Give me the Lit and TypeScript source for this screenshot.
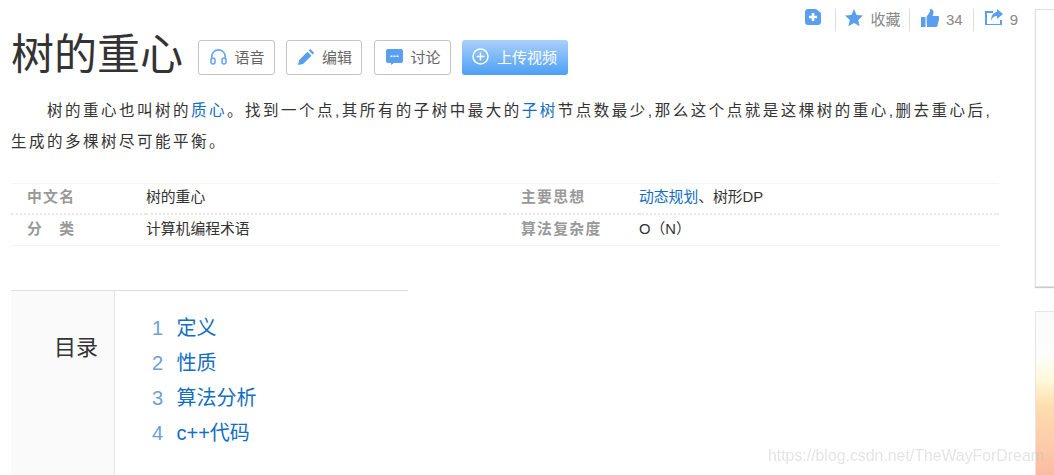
import { LitElement, html, css, svg } from 'lit';
import { customElement } from 'lit/decorators.js';

const BLUE = '#5a9ef0';

const icons = {
  add: svg`<path d="M3 0h8l5 4v9c0 1.700-1.300 3-3 3H3c-1.700 0-3-1.300-3-3V3c0-1.700 1.300-3 3-3z" fill="${BLUE}"/><path d="M8 4v8M4 8h8" stroke="#fff" stroke-width="2.600"/>`,
  star: svg`<path d="M9 0l2.600 6 6.400.6-4.800 4.300 1.400 6.400L9 14l-5.600 3.300 1.400-6.400L0 6.600 6.400 6z" fill="${BLUE}"/>`,
  thumb: svg`<path d="M0 8h4.500v10H0zM5.500 8l3.500-5.500V0c2 0 3.500 1 3.500 3 0 1.500-.5 3-1 4h5.500c1 0 1.500 1 1.300 2l-1.800 7.500c-.3 1-1 1.500-2 1.500h-8.500z" fill="${BLUE}"/>`,
  share: svg`<path d="M8 3H1v13h15v-5" fill="none" stroke="${BLUE}" stroke-width="2"/><path d="M12 0l6 5-6 5V7C9 7 7 8.500 6 12c0-5 2-8.500 6-9z" fill="${BLUE}"/>`,
  headset: svg`<path d="M1.800 11.500V8.500a6.700 6.700 0 0 1 13.400 0v3" fill="none" stroke="#6aa8f5" stroke-width="1.700"/><rect x="1" y="10" width="4" height="6" rx="2" fill="none" stroke="#6aa8f5" stroke-width="1.600"/><rect x="12" y="10" width="4" height="6" rx="2" fill="none" stroke="#6aa8f5" stroke-width="1.600"/>`,
  pencil: svg`<path d="M0 16l1.200-5L9.500 2.700l4 4L5 15zM10.700 1.500L12.200 0l4 4-1.500 1.500z" fill="${BLUE}"/>`,
  chat: svg`<path d="M2 1h13c1.100 0 2 .9 2 2v10c0 1.100-.9 2-2 2H8l-3 2v-2H2c-1.100 0-2-.9-2-2V3c0-1.100.9-2 2-2z" fill="${BLUE}"/><path d="M4.500 7.500h2v1.500h-2zM7.500 7.500h2v1.500h-2zM10.500 7.500h2v1.500h-2z" fill="#fff"/>`,
  plus: svg`<circle cx="8.500" cy="8.500" r="7.500" fill="none" stroke="#fff" stroke-width="1.500"/><path d="M8.500 4.500v8M4.500 8.500h8" stroke="#fff" stroke-width="1.500"/>`,
};

@customElement('app-root')
export class AppRoot extends LitElement {
  static styles = css`
    :host {
      display: block;
      position: relative;
      width: 1054px;
      height: 475px;
      overflow: hidden;
      background: #fff;
      font-family: 'Liberation Sans', 'Noto Sans CJK SC', sans-serif;
      color: #333;
    }

    .page {
      display: flex;
      height: 475px;
    }

    .main {
      width: 990px;
      margin-left: 11px;
      flex: none;
    }

    .side {
      margin-left: 34px;
      flex: 1;
      display: flex;
      flex-direction: column;
      gap: 24px;
      padding-top: 9px;
    }

    .side-top {
      height: 276px;
      border: 1px solid #e0e0e0;
      border-right: 0;
      box-shadow: 0 1px 1px #ccc;
    }

    .side-ad {
      flex: 1;
      border: 1px solid #e6e6e6;
      border-right: 0;
      border-bottom: 0;
      background: linear-gradient(#fbfbfb 0, #fdfdfb 26%, #fff8da 42%, #fedcae 58%, #fdc9a8 85%, #f9bba0 100%);
    }

    .tools {
      display: flex;
      justify-content: flex-end;
      height: 22px;
      padding-top: 9px;
      margin-right: -17px;
      font-size: 15px;
      line-height: 22px;
      color: #888;
    }

    .tool {
      display: flex;
      gap: 7px;
      height: 22px;
      padding: 0 10.500px;
      border-left: 1px solid #ddd;
    }

    .tool:nth-child(2) {
      padding: 0 9px;
    }

    .tool:first-child {
      border-left: 0;
      padding: 0 14px 0 0;
    }

    .tool:last-child {
      padding-right: 0;
    }

    .title-row {
      display: flex;
      align-items: center;
      gap: 11.500px;
      height: 46px;
      margin-top: 1px;
    }

    h1 {
      margin: 0 3px 0 0;
      font-size: 43px;
      line-height: 46px;
      font-weight: 400;
      color: #333;
    }

    .btn {
      display: flex;
      align-items: center;
      box-sizing: border-box;
      height: 35px;
      gap: 8px;
      padding: 0 9px 2px 11px;
      border: 1px solid #c4c4c4;
      border-radius: 3px;
      font-size: 15px;
      color: #666;
      margin-top: 5px;
    }

    .btn.upload {
      border: 0;
      color: #fff;
      background: linear-gradient(to top, #4d9ff5, #a9d0fa);
      padding: 0 11px 2px 10px;
    }

    .summary {
      margin: 17px 0 0;
      font-size: 15.500px;
      line-height: 31px;
      letter-spacing: 2.500px;
      text-indent: 36px;
      color: #333;
    }

    .summary a {
      color: #136ec2;
    }

    .facts {
      margin: 26px 2px 0 0;
      display: grid;
      grid-template-columns: 135px 359px 134px 1fr;
      grid-template-rows: 31px 31px;
      border-top: 1px solid #f6f6f6;
      font-size: 14.800px;
      line-height: 26px;
    }

    .facts > div {
      border-bottom: 2px dotted #e8e8e8;
    }

    .facts > div.last {
      padding-top: 1px;
      border-bottom: 1px solid #f3f3f3;
    }

    .facts .label {
      padding-left: 16px;
      font-weight: 700;
      color: #999;
      letter-spacing: 1.300px;
    }

    .facts a {
      color: #136ec2;
    }

    .toc {
      margin-top: 44px;
      width: 397px;
      height: 190px;
      display: flex;
      border-top: 1px solid #e0e0e0;
    }

    .toc-title {
      box-sizing: border-box;
      width: 104px;
      padding: 40px 16px 0 0;
      text-align: right;
      font-size: 22px;
      line-height: 34px;
      background: #fafafa;
      border-right: 1px solid #e5e5e5;
    }

    .toc-list {
      margin: 20px 0 0;
      padding: 0 0 0 37px;
      list-style: none;
      font-size: 20px;
      line-height: 35px;
      color: #136ec2;
    }

    .toc-list li {
      display: flex;
    }

    .toc-list .num {
      width: 24.500px;
      color: #6a9fdc;
    }

    .mark {
      position: absolute;
      left: 768px;
      top: 446px;
      font-size: 15.850px;
      line-height: 20px;
      color: rgba(190, 190, 190, 0.42);
      filter: blur(0.5px);
      white-space: nowrap;
    }
  `;

  private icon(body: unknown, w: number, h: number) {
    return html`<svg width=${w} height=${h} viewBox="0 0 ${w} ${h}">${body}</svg>`;
  }

  render() {
    return html`
      <div class="page">
        <div class="main">
          <div class="tools">
            <div class="tool">${this.icon(icons.add, 16, 16)}</div>
            <div class="tool">${this.icon(icons.star, 18, 18)}<span>收藏</span></div>
            <div class="tool">${this.icon(icons.thumb, 18, 18)}<span>34</span></div>
            <div class="tool">${this.icon(icons.share, 18, 16)}<span>9</span></div>
          </div>
          <div class="title-row">
            <h1>树的重心</h1>
            <div class="btn">${this.icon(icons.headset, 17, 17)}<span>语音</span></div>
            <div class="btn">${this.icon(icons.pencil, 16, 16)}<span>编辑</span></div>
            <div class="btn">${this.icon(icons.chat, 17, 17)}<span>讨论</span></div>
            <div class="btn upload">${this.icon(icons.plus, 17, 17)}<span>上传视频</span></div>
          </div>
          <p class="summary">树的重心也叫树的<a>质心</a>。找到一个点,其所有的子树中最大的<a>子树</a>节点数最少,那么这个点就是这棵树的重心,删去重心后,<br />生成的多棵树尽可能平衡。</p>
          <div class="facts">
            <div class="label">中文名</div>
            <div>树的重心</div>
            <div class="label">主要思想</div>
            <div><a>动态规划</a>、树形DP</div>
            <div class="label last">分　类</div>
            <div class="last">计算机编程术语</div>
            <div class="label last">算法复杂度</div>
            <div class="last">O（N）</div>
          </div>
          <div class="toc">
            <div class="toc-title">目录</div>
            <ol class="toc-list">
              <li><span class="num">1</span>定义</li>
              <li><span class="num">2</span>性质</li>
              <li><span class="num">3</span>算法分析</li>
              <li><span class="num">4</span>c++代码</li>
            </ol>
          </div>
        </div>
        <div class="side">
          <div class="side-top"></div>
          <div class="side-ad"></div>
        </div>
      </div>
      <div class="mark">https://blog.csdn.net/TheWayForDream</div>
    `;
  }
}
